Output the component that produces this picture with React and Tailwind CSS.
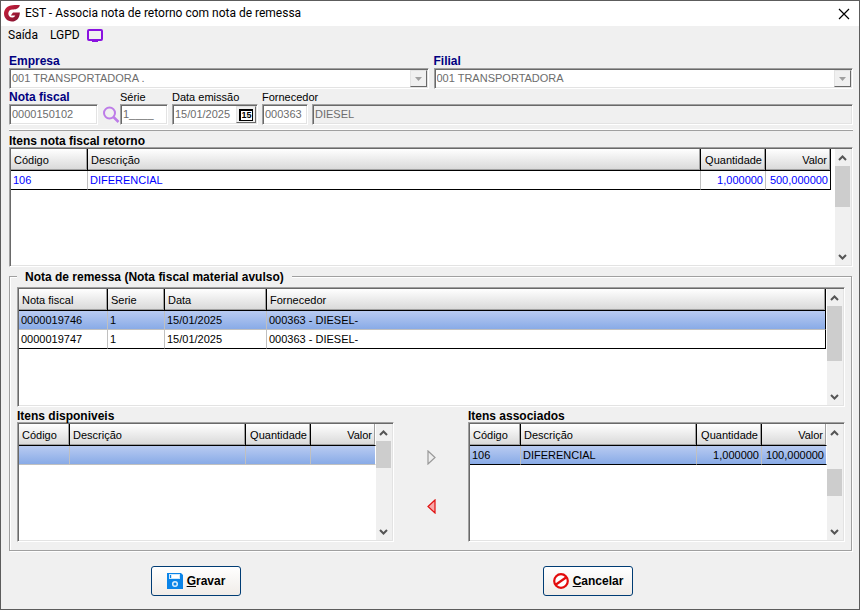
import React, { useState } from "react"

const sunken =
  "border border-t-[#a0a0a0] border-l-[#a0a0a0] border-r-white border-b-white p-px shadow-[inset_1px_1px_0_#696969,inset_-1px_-1px_0_#e3e3e3]"
const raised = "border border-t-[#e3e3e3] border-l-[#e3e3e3] border-r-[#696969] border-b-[#696969] bg-[#f0f0f0]"
const heading = "h-[15px] text-[12px] leading-[17px] font-bold"
const gridTitle = "h-[15px] text-[12px] leading-[19px] font-bold"

const itemColumns = [
  { label: "Código", width: "w-[51px]" },
  { label: "Descrição" },
  { label: "Quantidade", width: "w-[65px]", right: true },
  { label: "Valor", width: "w-[65px]", right: true },
]

const returnColumns = [{ label: "Código", width: "w-[77px]" }, ...itemColumns.slice(1)]

const noteColumns = [
  { label: "Nota fiscal", width: "w-[89px]" },
  { label: "Serie", width: "w-[57px]" },
  { label: "Data", width: "w-[102px]" },
  { label: "Fornecedor" },
]

const notes = [
  ["0000019746", "1", "15/01/2025", "000363 - DIESEL-"],
  ["0000019747", "1", "15/01/2025", "000363 - DIESEL-"],
]

function Logo() {
  return (
    <svg width="17" height="17" viewBox="0 0 17 17" aria-hidden="true">
      <defs>
        <linearGradient id="logo" x1="0" y1="0" x2="1" y2="1">
          <stop offset="0" stopColor="#d0203c" />
          <stop offset="1" stopColor="#7d1230" />
        </linearGradient>
      </defs>
      <path
        fill="url(#logo)"
        d="M16 .3C14.5 0 11.500 0 8.500 .2C3.500 .6 0 4 0 8.600C0 13.300 3.500 16.500 8 16.500C12 16.500 15.500 14 15.900 7.500H9L6.800 10.500H11.300C10.500 12 9.500 12.600 8.200 12.600C5.800 12.600 4.300 10.900 4.300 8.600C4.300 6 6 4.600 8.500 4.500C11.500 4.400 14.500 4.300 16 .3Z"
      />
    </svg>
  )
}

function Chevron({ down }) {
  return (
    <svg width="9" height="6" viewBox="0 0 9 6" aria-hidden="true">
      <path d={down ? "M1 1L4.500 4.500L8 1" : "M1 5L4.500 1.500L8 5"} fill="none" stroke="#555" strokeWidth="2" />
    </svg>
  )
}

function ScrollBar({ thumb }) {
  return (
    <div className="flex w-4 shrink-0 flex-col bg-[#f0f0f0]">
      <button type="button" aria-label="Rolar para cima" className="flex h-[17px] w-[15px] items-center justify-center">
        <Chevron />
      </button>
      <div className="flex-1">
        <div className={`w-[15px] bg-[#cdcdcd] ${thumb}`} />
      </div>
      <button type="button" aria-label="Rolar para baixo" className="flex h-[17px] w-[15px] items-center justify-center">
        <Chevron down />
      </button>
    </div>
  )
}

function Grid({ label, columns, rows, selected, onSelect, thumb, gap = "", closed, text = "text-black", lastLine = "border-b-black" }) {
  return (
    <div className={`flex h-[120px] bg-white ${sunken}`}>
      <div className={`min-w-0 flex-1 ${gap}`}>
        <table aria-label={label} className="w-full table-fixed border-separate border-spacing-0">
          <thead>
            <tr>
              {columns.map((col, i) => (
                <th
                  key={col.label}
                  className={`h-[22px] border-r border-b border-b-black bg-linear-to-b from-white to-[#d8d8d8] px-[3px] pt-0.5 font-normal shadow-[inset_-1px_-1px_0_#a0a0a0] ${
                    i === columns.length - 1 && !closed ? "border-r-white" : "border-r-black"
                  } ${col.right ? "text-right" : "text-left"} ${col.width || ""}`}
                >
                  {col.label}
                </th>
              ))}
            </tr>
          </thead>
          <tbody className={text}>
            {rows.map((row, r) => (
              <tr
                key={r}
                onClick={() => onSelect && onSelect(r)}
                className={r === selected ? "bg-linear-to-b from-[#b9cbf1] to-[#86a9e6]" : ""}
              >
                {row.map((cell, i) => (
                  <td
                    key={i}
                    className={`h-[19px] overflow-hidden border-r border-b px-0.5 whitespace-nowrap ${
                      r === rows.length - 1 ? lastLine : "border-b-[#c0c0c0]"
                    } ${i < row.length - 1 ? "border-r-[#c0c0c0]" : closed ? "border-r-black" : "border-r-white"} ${
                      columns[i].right ? "text-right" : ""
                    }`}
                  >
                    {cell}
                  </td>
                ))}
              </tr>
            ))}
          </tbody>
        </table>
      </div>
      <ScrollBar thumb={thumb} />
    </div>
  )
}

function Combo({ id, label, value }) {
  return (
    <div className="min-w-0 flex-1">
      <label htmlFor={id} className={`block text-[#000080] ${heading}`}>
        {label}
      </label>
      <div className={`flex h-[21px] bg-white ${sunken}`}>
        <select id={id} disabled className="min-w-0 flex-1 appearance-none px-px text-[#6d6d6d] opacity-100">
          <option>{value}</option>
        </select>
        <span className={`flex w-[17px] items-center justify-center ${raised}`}>
          <svg width="7" height="4" viewBox="0 0 7 4" aria-hidden="true">
            <path d="M0 0H7L3.500 4Z" fill="#a0a0a0" />
          </svg>
        </span>
      </div>
    </div>
  )
}

function Field({ id, label, value, width, bold, children }) {
  return (
    <div className={width}>
      <label
        htmlFor={id}
        className={`block whitespace-nowrap ${bold ? `text-[#000080] ${heading}` : "h-[15px] leading-[17px]"}`}
      >
        {label}
      </label>
      <div className={`flex h-[21px] bg-white ${sunken}`}>
        <input id={id} defaultValue={value} disabled className="w-full min-w-0 px-px text-[#6d6d6d]" />
        {children}
      </div>
    </div>
  )
}

const actionButton =
  "flex h-[30px] w-[90px] items-center justify-center gap-1 rounded-[3px] border border-[#003c74] bg-linear-to-b from-white to-[#f0ece8] text-[12px] font-bold"

export default function App() {
  const [note, setNote] = useState(0)

  return (
    <div className="flex min-h-screen flex-col border border-[#5c5c5c] bg-[#f0f0f0] font-['Liberation_Sans',Arial,sans-serif] text-[11px] leading-[15px] text-black">
      <header className="flex h-[25px] items-center gap-1 bg-white pr-[9px] pl-[3px] font-[Roboto,sans-serif]">
        <Logo />
        <h1 className="flex-1 text-[12px]">EST - Associa nota de retorno com nota de remessa</h1>
        <button type="button" aria-label="Fechar">
          <svg width="12" height="12" viewBox="0 0 12 12" aria-hidden="true">
            <path d="M1 1L11 11M11 1L1 11" stroke="#000" strokeWidth="1.200" />
          </svg>
        </button>
      </header>

      <nav className="flex h-[18px] items-center gap-3 pl-[7px] font-[Roboto,sans-serif] text-[12px]">
        <button type="button">Saída</button>
        <div className="flex items-center gap-[7px]">
          <button type="button">LGPD</button>
          <button type="button" aria-label="Tela">
            <svg width="16" height="13" viewBox="0 0 16 13" aria-hidden="true">
              <rect x="1" y="1" width="14" height="10" rx="1" fill="none" stroke="#8a12e0" strokeWidth="2" />
              <path d="M5 11H11V13H5Z" fill="#8a12e0" />
            </svg>
          </button>
        </div>
      </nav>

      <main className="flex flex-col pt-[9px] pr-1.5 pl-2">
        <div className="flex gap-[5px]">
          <Combo id="empresa" label="Empresa" value="001 TRANSPORTADORA ." />
          <Combo id="filial" label="Filial" value="001 TRANSPORTADORA" />
        </div>

        <div className="flex items-end gap-1 border-b border-white pb-1">
          <Field id="nota" label="Nota fiscal" value="0000150102" width="w-[89px]" bold />
          <div className="flex items-end">
            <button type="button" aria-label="Pesquisar nota" className="flex h-[21px] w-[18px] items-center">
              <svg width="18" height="18" viewBox="0 0 18 18" aria-hidden="true">
                <circle cx="7.500" cy="7" r="5.500" fill="none" stroke="#bd7ce8" strokeWidth="2" />
                <path d="M11.500 11L16.500 16" stroke="#bd7ce8" strokeWidth="2.500" />
              </svg>
            </button>
            <Field id="serie" label="Série" value="1____" width="w-12" />
          </div>
          <Field id="emissao" label="Data emissão" value="15/01/2025" width="w-[86px]">
            <button
              type="button"
              aria-label="Abrir calendário"
              className={`flex w-5 shrink-0 items-center justify-center ${raised}`}
            >
              <span className="flex h-3 w-[14px] items-center justify-center border-2 border-r border-b border-black bg-white text-[9px] font-bold">
                15
              </span>
            </button>
          </Field>
          <Field id="fornecedor" label="Fornecedor" value="000363" width="w-[46px]" />
          <div className={`flex h-[21px] flex-1 ${sunken}`}>
            <input
              aria-label="Nome do fornecedor"
              defaultValue="DIESEL"
              disabled
              className="w-full px-px text-[#6d6d6d]"
            />
          </div>
        </div>

        <section className="border-t border-[#a0a0a0] pt-px">
          <h2 className={gridTitle}>Itens nota fiscal retorno</h2>
          <Grid
            label="Itens nota fiscal retorno"
            columns={returnColumns}
            rows={[["106", "DIFERENCIAL", "1,000000", "500,000000"]]}
            thumb="h-[41px]"
            gap="pr-1"
            text="text-[#0000ff]"
            closed
          />
        </section>

        <fieldset className="mt-0.5 mr-px min-w-0 border border-[#a0a0a0] pt-[3px] pr-1.5 pb-2 pl-[7px] shadow-[1px_1px_0_#fff,inset_1px_1px_0_#fff]">
          <legend className={`bg-[#f0f0f0] px-2 ${heading}`}>Nota de remessa (Nota fiscal material avulso)</legend>
          <Grid
            label="Notas de remessa"
            columns={noteColumns}
            rows={notes}
            selected={note}
            onSelect={setNote}
            thumb="h-[55px]"
            gap="pr-px"
            closed
          />

          <div className="flex">
            <section className="min-w-0 flex-1">
              <h2 className={gridTitle}>Itens disponiveis</h2>
              <Grid
                label="Itens disponiveis"
                columns={itemColumns}
                rows={[["", "", "", ""]]}
                selected={0}
                thumb="h-[27px]"
                lastLine="border-b-[#c0c0c0]"
              />
            </section>
            <div className="flex w-[74px] flex-col items-center justify-center gap-[29px] pt-[15px]">
              <button type="button" aria-label="Associar item" className="flex h-5 w-5 items-center justify-center">
                <svg width="9" height="15" viewBox="0 0 9 15" aria-hidden="true">
                  <path d="M1 1L8 7.500L1 14Z" fill="#eee" stroke="#999" strokeWidth="1.200" />
                </svg>
              </button>
              <button type="button" aria-label="Desassociar item" className="flex h-5 w-5 items-center justify-center">
                <svg width="9" height="15" viewBox="0 0 9 15" aria-hidden="true">
                  <path d="M8 1L1 7.500L8 14Z" fill="#f9a8a8" stroke="#e01010" strokeWidth="1.200" />
                </svg>
              </button>
            </div>
            <section className="min-w-0 flex-1">
              <h2 className={gridTitle}>Itens associados</h2>
              <Grid
                label="Itens associados"
                columns={itemColumns}
                rows={[["106", "DIFERENCIAL", "1,000000", "100,000000"]]}
                selected={0}
                thumb="mt-7 h-[27px]"
              />
            </section>
          </div>
        </fieldset>

        <div className="flex justify-between pt-[15px] pr-[220px] pb-3 pl-[142px]">
          <button type="button" className={actionButton}>
            <svg width="16" height="16" viewBox="0 0 16 16" aria-hidden="true">
              <path d="M0 0H14L16 2V16H0Z" fill="#0a84e8" />
              <path d="M2 1H13V6H2Z" fill="#cfe8fb" />
              <path d="M5 2H12V5H5Z" fill="#fff" />
              <path d="M3 2H4V5H3Z" fill="#0a84e8" />
              <circle cx="8" cy="11" r="2.300" fill="none" stroke="#d8edfc" strokeWidth="1.500" />
            </svg>
            <span>
              <u>G</u>ravar
            </span>
          </button>
          <button type="button" className={actionButton}>
            <svg width="16" height="16" viewBox="0 0 16 16" aria-hidden="true">
              <circle cx="8" cy="8" r="6.800" fill="#fff" stroke="#e30b0b" strokeWidth="2.200" />
              <path d="M3 11.500L13 4.500" stroke="#e30b0b" strokeWidth="2.200" />
            </svg>
            <span>
              <u>C</u>ancelar
            </span>
          </button>
        </div>
      </main>
    </div>
  )
}
